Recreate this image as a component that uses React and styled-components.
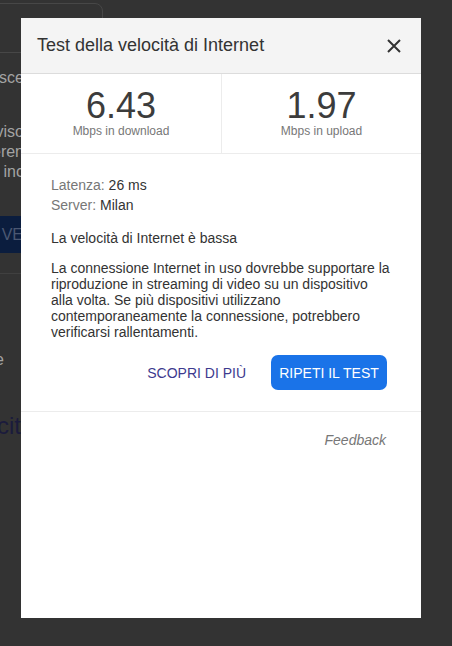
import styled, { createGlobalStyle } from "styled-components";

const GlobalStyle = createGlobalStyle`
  html, body {
    margin: 0;
    padding: 0;
    background: #333333;
    font-family: "Liberation Sans", Arial, sans-serif;
  }
`;

/* page behind the dialog, mostly hidden */
const Backdrop = styled.div`
  width: 452px;
  height: 646px;
  overflow: hidden;
  display: flex;
  flex-direction: column;
`;

const SearchBox = styled.div`
  margin: 3px 0 0 -10px;
  width: 111px;
  height: 48px;
  border: 1px solid #474747;
  border-radius: 8px;
`;

const Snip = styled.div`
  width: ${(p) => p.w || 24}px;
  margin-top: ${(p) => p.top || 0}px;
  display: flex;
  justify-content: flex-end;
  overflow: hidden;
  white-space: nowrap;
  font-size: ${(p) => p.size || 16}px;
  line-height: ${(p) => p.lh || 20}px;
  color: ${(p) => p.color || "#a3a3a3"};
`;

const Band = styled.div`
  margin-top: 34px;
  height: 37px;
  width: 40px;
  padding-right: 17px;
  box-sizing: border-box;
  background: #0b1d3e;
  color: #4b5872;
  font-size: 16px;
  display: flex;
  align-items: center;
  justify-content: flex-end;
  overflow: hidden;
  white-space: nowrap;
`;

const Rule = styled.div`
  margin-top: 20px;
  width: 24px;
  height: 1px;
  background: #404040;
`;

const Layer = styled.div`
  position: fixed;
  inset: 0;
  display: flex;
  align-items: flex-start;
  padding: 18px 0 0 21px;
`;

const Dialog = styled.div`
  width: 400px;
  height: 600px;
  background: #ffffff;
  display: flex;
  flex-direction: column;
  color: #333333;
`;

const Header = styled.div`
  height: 55px;
  background: #f4f4f4;
  border-bottom: 1px solid #dcdcdc;
  display: flex;
  align-items: center;
  justify-content: space-between;
  padding: 0 20px 0 16px;
`;

const Title = styled.h1`
  margin: 0;
  font-size: 18px;
  font-weight: normal;
  color: #333333;
`;

const Close = styled.button`
  border: none;
  background: none;
  padding: 0;
  width: 14px;
  height: 14px;
  display: flex;
  cursor: pointer;
`;

const Stats = styled.div`
  display: grid;
  grid-template-columns: 1fr 1fr;
  border-bottom: 1px solid #ececec;
`;

const Stat = styled.div`
  display: flex;
  flex-direction: column;
  align-items: center;
  padding: 13px 0 15px;
  & + & {
    border-left: 1px solid #ececec;
  }
`;

const Value = styled.div`
  font-size: 36px;
  line-height: 38px;
  color: #3c3c3c;
`;

const Unit = styled.div`
  font-size: 12px;
  line-height: 13px;
  color: #777777;
`;

const Body = styled.div`
  padding: 21px 30px 0;
`;

const InfoLine = styled.div`
  font-size: 14px;
  line-height: 20px;
  color: #333333;
  span {
    color: #777777;
  }
`;

const Verdict = styled.p`
  margin: 15px 0 0;
  font-size: 14px;
  line-height: 16px;
`;

const Text = styled.p`
  margin: 14px 0 0;
  font-size: 14px;
  line-height: 16px;
`;

const Actions = styled.div`
  display: flex;
  justify-content: flex-end;
  align-items: center;
  gap: 25px;
  margin-top: 15px;
  padding-right: 4px;
`;

const LinkButton = styled.button`
  border: none;
  background: none;
  padding: 0;
  font-family: inherit;
  font-size: 14px;
  color: #3d3a8e;
  cursor: pointer;
`;

const MainButton = styled.button`
  border: none;
  height: 35px;
  padding: 0 8px;
  width: 116px;
  border-radius: 7px;
  background: #1a73e8;
  color: #ffffff;
  font-family: inherit;
  font-size: 14px;
  cursor: pointer;
`;

const Footer = styled.div`
  margin-top: 21px;
  border-top: 1px solid #ececec;
  padding: 20px 35px 0 0;
  display: flex;
  justify-content: flex-end;
`;

const Feedback = styled.a`
  font-size: 14px;
  line-height: 16px;
  font-style: italic;
  color: #777777;
`;

const App = () => {
  return (
    <>
      <GlobalStyle />
      <Backdrop>
        <SearchBox />
        <Snip top={15}>conosce</Snip>
        <Snip top={34}>avviso</Snip>
        <Snip>differen</Snip>
        <Snip>inc</Snip>
        <Band>LA VE</Band>
        <Rule />
        <Snip top={76} w={4}>e</Snip>
        <Snip top={42} w={21} size={24} lh={28} color="#1b1b3c">velocit</Snip>
      </Backdrop>
      <Layer>
        <Dialog>
          <Header>
            <Title>Test della velocità di Internet</Title>
            <Close aria-label="Chiudi">
              <svg width="14" height="14" viewBox="0 0 14 14">
                <path d="M1 1L13 13M13 1L1 13" stroke="#333" strokeWidth="2" />
              </svg>
            </Close>
          </Header>
          <Stats>
            <Stat>
              <Value>6.43</Value>
              <Unit>Mbps in download</Unit>
            </Stat>
            <Stat>
              <Value>1.97</Value>
              <Unit>Mbps in upload</Unit>
            </Stat>
          </Stats>
          <Body>
            <InfoLine><span>Latenza:</span> 26 ms</InfoLine>
            <InfoLine><span>Server:</span> Milan</InfoLine>
            <Verdict>La velocità di Internet è bassa</Verdict>
            <Text>
              La connessione Internet in uso dovrebbe supportare la riproduzione
              in streaming di video su un dispositivo alla volta. Se più
              dispositivi utilizzano contemporaneamente la connessione,
              potrebbero verificarsi rallentamenti.
            </Text>
            <Actions>
              <LinkButton>SCOPRI DI PIÙ</LinkButton>
              <MainButton>RIPETI IL TEST</MainButton>
            </Actions>
          </Body>
          <Footer>
            <Feedback>Feedback</Feedback>
          </Footer>
        </Dialog>
      </Layer>
    </>
  );
};

export default App;
